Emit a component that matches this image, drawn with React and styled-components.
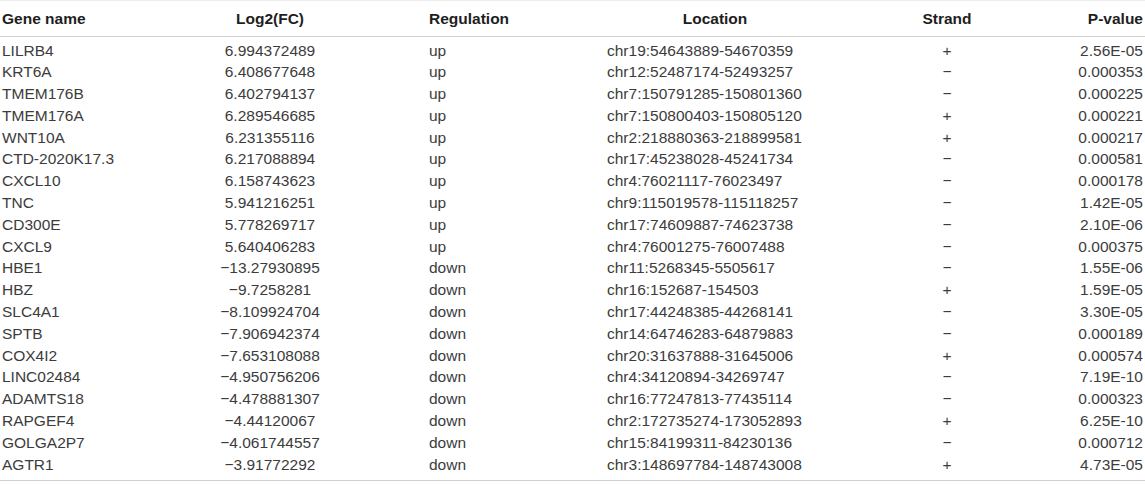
import React from "react";
import styled, { createGlobalStyle } from "styled-components";

const Global = createGlobalStyle`
  html, body { margin: 0; padding: 0; background: #ffffff; }
  body { font-family: "Liberation Sans", Arial, Helvetica, sans-serif; }
`;

const Table = styled.table`
  width: 1145px;
  table-layout: fixed;
  border-collapse: collapse;
  font-family: "Liberation Sans", Arial, Helvetica, sans-serif;
  font-size: 15.5px;
  color: #3c3c3c;
`;

const HeadRow = styled.tr`
  height: 36px;
  border-top: 1px solid #ececec;
  border-bottom: 1px solid #cfcfcf;
`;

const Th = styled.th`
  padding: 0 ${(p) => p.$pr || 0}px 0 ${(p) => p.$pl || 0}px;
  text-align: ${(p) => p.$align || "left"};
  font-weight: bold;
  color: #1e1e1e;
  white-space: nowrap;
  vertical-align: middle;
`;

const Body = styled.tbody`
  border-bottom: 1px solid #cfcfcf;
`;

const Spacer = styled.tr`
  height: ${(p) => p.$h}px;
`;

const Row = styled.tr`
  height: 21.8px;
`;

const Td = styled.td`
  padding: 0 ${(p) => p.$pr || 0}px 0 ${(p) => p.$pl || 0}px;
  text-align: ${(p) => p.$align || "left"};
  white-space: nowrap;
  line-height: 21.8px;
  vertical-align: middle;
`;

const cols = [
  { w: 178, align: "left", pl: 2 },
  { w: 184, align: "center" },
  { w: 245, align: "left", pl: 67 },
  { w: 216, align: "left" },
  { w: 238, align: "center", pl: 10 },
  { w: 84, align: "right", pr: 2 },
];

const headers = [
  { t: "Gene name" },
  { t: "Log2(FC)" },
  { t: "Regulation" },
  { t: "Location", align: "center" },
  { t: "Strand" },
  { t: "P-value" },
];

const M = "\u2212";

const data = [
  ["LILRB4", "6.994372489", "up", "chr19:54643889-54670359", "+", "2.56E-05"],
  ["KRT6A", "6.408677648", "up", "chr12:52487174-52493257", M, "0.000353"],
  ["TMEM176B", "6.402794137", "up", "chr7:150791285-150801360", M, "0.000225"],
  ["TMEM176A", "6.289546685", "up", "chr7:150800403-150805120", "+", "0.000221"],
  ["WNT10A", "6.231355116", "up", "chr2:218880363-218899581", "+", "0.000217"],
  ["CTD-2020K17.3", "6.217088894", "up", "chr17:45238028-45241734", M, "0.000581"],
  ["CXCL10", "6.158743623", "up", "chr4:76021117-76023497", M, "0.000178"],
  ["TNC", "5.941216251", "up", "chr9:115019578-115118257", M, "1.42E-05"],
  ["CD300E", "5.778269717", "up", "chr17:74609887-74623738", M, "2.10E-06"],
  ["CXCL9", "5.640406283", "up", "chr4:76001275-76007488", M, "0.000375"],
  ["HBE1", M + "13.27930895", "down", "chr11:5268345-5505617", M, "1.55E-06"],
  ["HBZ", M + "9.7258281", "down", "chr16:152687-154503", "+", "1.59E-05"],
  ["SLC4A1", M + "8.109924704", "down", "chr17:44248385-44268141", M, "3.30E-05"],
  ["SPTB", M + "7.906942374", "down", "chr14:64746283-64879883", M, "0.000189"],
  ["COX4I2", M + "7.653108088", "down", "chr20:31637888-31645006", "+", "0.000574"],
  ["LINC02484", M + "4.950756206", "down", "chr4:34120894-34269747", M, "7.19E-10"],
  ["ADAMTS18", M + "4.478881307", "down", "chr16:77247813-77435114", M, "0.000323"],
  ["RAPGEF4", M + "4.44120067", "down", "chr2:172735274-173052893", "+", "6.25E-10"],
  ["GOLGA2P7", M + "4.061744557", "down", "chr15:84199311-84230136", M, "0.000712"],
  ["AGTR1", M + "3.91772292", "down", "chr3:148697784-148743008", "+", "4.73E-05"],
];

export default function App() {
  return (
    <>
      <Global />
      <Table>
        <colgroup>
          {cols.map((c, i) => (
            <col key={i} style={{ width: c.w }} />
          ))}
        </colgroup>
        <thead>
          <HeadRow>
            {headers.map((h, i) => (
              <Th
                key={i}
                $align={h.align || cols[i].align}
                $pl={cols[i].pl}
                $pr={cols[i].pr}
              >
                {h.t}
              </Th>
            ))}
          </HeadRow>
        </thead>
        <Body>
          <Spacer $h={3}>
            <td colSpan={6} />
          </Spacer>
          {data.map((r, ri) => (
            <Row key={ri}>
              {r.map((v, i) => (
                <Td key={i} $align={cols[i].align} $pl={cols[i].pl} $pr={cols[i].pr}>
                  {v}
                </Td>
              ))}
            </Row>
          ))}
          <Spacer $h={5}>
            <td colSpan={6} />
          </Spacer>
        </Body>
      </Table>
    </>
  );
}
